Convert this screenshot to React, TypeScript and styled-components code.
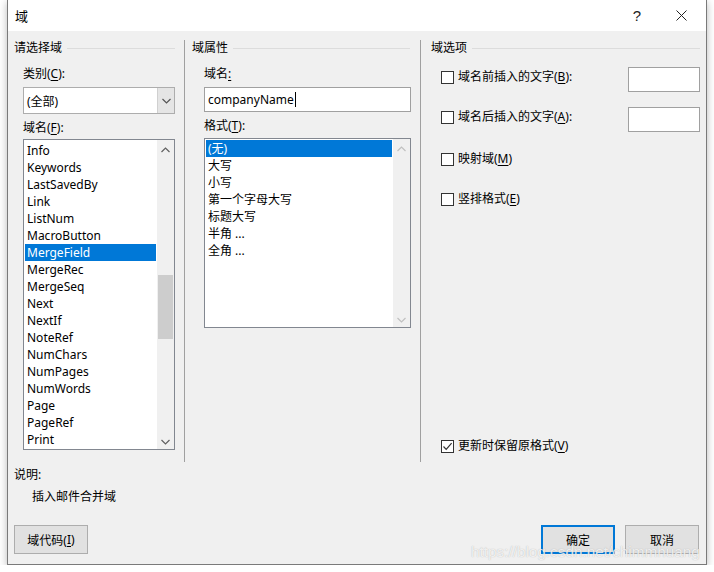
import React from "react";
import styled, { createGlobalStyle } from "styled-components";

const GlobalStyle = createGlobalStyle`
  html, body {
    margin: 0;
    padding: 0;
    background: #ffffff;
  }
  body {
    font-family: "Noto Sans", "Noto Sans CJK SC", sans-serif;
    font-size: 12px;
    color: #000;
  }
  * {
    box-sizing: border-box;
  }
`;

const fieldNames = [
  "Info",
  "Keywords",
  "LastSavedBy",
  "Link",
  "ListNum",
  "MacroButton",
  "MergeField",
  "MergeRec",
  "MergeSeq",
  "Next",
  "NextIf",
  "NoteRef",
  "NumChars",
  "NumPages",
  "NumWords",
  "Page",
  "PageRef",
  "Print",
];

const formats = ["(无)", "大写", "小写", "第一个字母大写", "标题大写", "半角 ...", "全角 ..."];

const Window = styled.div`
  position: relative;
  margin-left: 7px;
  width: 700px;
  height: 565px;
  border: 1px solid #7a7a7a;
  border-top: none;
  background: #f0f0f0;
  display: flex;
  flex-direction: column;
  box-shadow: 0 2px 8px rgba(0, 0, 0, 0.28);
`;

const TitleBar = styled.div`
  height: 31px;
  background: #ffffff;
  display: flex;
  align-items: center;
  padding-left: 7px;
  padding-right: 1px;
`;

const TitleText = styled.div`
  flex: 1;
  font-size: 13px;
`;

const TitleButton = styled.div<{ $w: number }>`
  width: ${(p) => p.$w}px;
  height: 31px;
  display: flex;
  align-items: center;
  justify-content: center;
  font-family: "Liberation Sans", sans-serif;
  font-size: 15px;
  color: #222;
`;

const Body = styled.div`
  flex: 1;
  display: flex;
  flex-direction: column;
  padding-top: 9px;
`;

const Columns = styled.div`
  height: 422px;
  display: flex;
`;

const Column = styled.div<{ $w: number; $pad: number; $sep?: boolean }>`
  width: ${(p) => p.$w}px;
  padding-left: ${(p) => p.$pad}px;
  border-right: ${(p) => (p.$sep ? "1px solid #a0a0a0" : "none")};
  display: flex;
  flex-direction: column;
`;

const GroupHeader = styled.div<{ $indent: number; $right: number }>`
  height: 16px;
  display: flex;
  align-items: center;
  margin-left: ${(p) => p.$indent}px;
  margin-right: ${(p) => p.$right}px;
  line-height: 16px;
`;

const HeaderLine = styled.div`
  flex: 1;
  height: 1px;
  background: #dcdcdc;
  margin-left: 5px;
`;

const Label = styled.div<{ $top: number }>`
  margin-top: ${(p) => p.$top}px;
  line-height: 16px;
  height: 16px;
  white-space: nowrap;
`;

const Key = styled.span`
  text-decoration: underline;
  text-underline-offset: 2px;
`;

const Combo = styled.div`
  margin-top: 5px;
  width: 152px;
  height: 27px;
  border: 1px solid #adadad;
  background: #fff;
  display: flex;
  align-items: center;
`;

const ComboText = styled.div`
  flex: 1;
  padding-left: 3px;
`;

const ComboButton = styled.div`
  width: 17px;
  height: 100%;
  background: #e5e5e5;
  border-left: 1px solid #d0d0d0;
  display: flex;
  align-items: center;
  justify-content: center;
`;

const ListBox = styled.div<{ $top: number; $w: number; $h: number }>`
  margin-top: ${(p) => p.$top}px;
  width: ${(p) => p.$w}px;
  height: ${(p) => p.$h}px;
  border: 1px solid #828790;
  background: #fff;
  display: flex;
`;

const ListItems = styled.div<{ $padTop: number }>`
  flex: 1;
  padding: ${(p) => p.$padTop}px 1px 0 1px;
  overflow: hidden;
`;

const ListItem = styled.div<{ $selected?: boolean }>`
  height: 17px;
  line-height: 17px;
  padding-left: 2px;
  white-space: nowrap;
  background: ${(p) => (p.$selected ? "#0078d7" : "transparent")};
  color: ${(p) => (p.$selected ? "#fff" : "#000")};
`;

const ScrollBar = styled.div`
  width: 17px;
  background: #f0f0f0;
  display: flex;
  flex-direction: column;
`;

const ScrollArrow = styled.div`
  height: 17px;
  display: flex;
  align-items: center;
  justify-content: center;
  padding-top: 3px;
`;

const ScrollTrack = styled.div`
  flex: 1;
  display: flex;
  flex-direction: column;
  padding: 0 1px;
`;

const Thumb = styled.div<{ $top: number; $h: number }>`
  margin-top: ${(p) => p.$top}px;
  height: ${(p) => p.$h}px;
  background: #cdcdcd;
`;

const TextInput = styled.div<{ $w: number }>`
  margin-top: 5px;
  width: ${(p) => p.$w}px;
  height: 25px;
  border: 1px solid #a0a0a0;
  background: #fff;
  display: flex;
  align-items: center;
  padding-left: 3px;
`;

const Caret = styled.span`
  display: inline-block;
  width: 1px;
  height: 15px;
  background: #000;
  margin-left: 1px;
`;

const OptionRow = styled.div<{ $top: number; $h: number }>`
  margin-top: ${(p) => p.$top}px;
  height: ${(p) => p.$h}px;
  display: flex;
  align-items: flex-start;
  justify-content: space-between;
  padding-right: 6px;
`;

const CheckLabel = styled.label<{ $offset: number }>`
  display: flex;
  align-items: center;
  gap: 4px;
  margin-top: ${(p) => p.$offset}px;
  line-height: 16px;
  height: 16px;
  white-space: nowrap;
`;

const Box = styled.span`
  width: 13px;
  height: 13px;
  border: 1px solid #333;
  background: #fff;
  display: flex;
  align-items: center;
  justify-content: center;
`;

const SmallInput = styled.div`
  width: 72px;
  height: 25px;
  border: 1px solid #a0a0a0;
  background: #fff;
`;

const Spacer = styled.div`
  flex: 1;
`;

const Description = styled.div<{ $top: number; $indent: number }>`
  margin-top: ${(p) => p.$top}px;
  margin-left: ${(p) => p.$indent}px;
  height: 16px;
  line-height: 16px;
`;

const ButtonRow = styled.div`
  margin-top: 20px;
  display: flex;
  padding: 0 7px 0 6px;
  gap: 10px;
`;

const Button = styled.div<{ $primary?: boolean }>`
  width: 74px;
  height: 29px;
  background: #e1e1e1;
  border: ${(p) => (p.$primary ? "2px solid #0078d7" : "1px solid #adadad")};
  display: flex;
  align-items: center;
  justify-content: center;
`;

const Watermark = styled.div`
  position: absolute;
  left: 463px;
  top: 543px;
  font-family: "Liberation Sans", sans-serif;
  font-size: 15.3px;
  line-height: 18px;
  color: rgba(255, 255, 255, 0.8);
  text-shadow: 0 0 1px rgba(120, 120, 120, 0.55);
  white-space: nowrap;
  pointer-events: none;
`;

const Chevron: React.FC<{ up?: boolean; color: string }> = ({ up, color }) => (
  <svg width="9" height="6" viewBox="0 0 9 6">
    <path
      d={up ? "M0.5 5 L4.5 1 L8.5 5" : "M0.5 1 L4.5 5 L8.5 1"}
      fill="none"
      stroke={color}
      strokeWidth="1.2"
    />
  </svg>
);

const CloseIcon = () => (
  <svg width="11" height="11" viewBox="0 0 11 11">
    <path d="M0.5 0.5 L10.5 10.5 M10.5 0.5 L0.5 10.5" stroke="#222" strokeWidth="1" />
  </svg>
);

const CheckMark = () => (
  <svg width="11" height="11" viewBox="0 0 11 11">
    <path d="M1.5 5.5 L4.2 8.3 L9.6 2.2" fill="none" stroke="#333" strokeWidth="1.2" />
  </svg>
);

const Check: React.FC<{ checked?: boolean; offset: number; children: React.ReactNode }> = ({
  checked,
  offset,
  children,
}) => (
  <CheckLabel $offset={offset}>
    <Box>{checked && <CheckMark />}</Box>
    <span>{children}</span>
  </CheckLabel>
);

const App: React.FC = () => {
  return (
    <>
      <GlobalStyle />
      <Window>
        <TitleBar>
          <TitleText>域</TitleText>
          <TitleButton $w={40}>?</TitleButton>
          <TitleButton $w={48}>
            <CloseIcon />
          </TitleButton>
        </TitleBar>
        <Body>
          <Columns>
            <Column $w={177} $pad={15} $sep>
              <GroupHeader $indent={-9} $right={9}>
                请选择域
                <HeaderLine />
              </GroupHeader>
              <Label $top={10}>
                类别(<Key>C</Key>):
              </Label>
              <Combo>
                <ComboText>(全部)</ComboText>
                <ComboButton>
                  <Chevron color="#555" />
                </ComboButton>
              </Combo>
              <Label $top={6}>
                域名(<Key>F</Key>):
              </Label>
              <ListBox $top={3} $w={152} $h={311}>
                <ListItems $padTop={2}>
                  {fieldNames.map((n) => (
                    <ListItem key={n} $selected={n === "MergeField"}>
                      {n}
                    </ListItem>
                  ))}
                </ListItems>
                <ScrollBar>
                  <ScrollArrow>
                    <Chevron up color="#606060" />
                  </ScrollArrow>
                  <ScrollTrack>
                    <Thumb $top={118} $h={64} />
                  </ScrollTrack>
                  <ScrollArrow>
                    <Chevron color="#606060" />
                  </ScrollArrow>
                </ScrollBar>
              </ListBox>
            </Column>
            <Column $w={236} $pad={19} $sep>
              <GroupHeader $indent={-12} $right={10}>
                域属性
                <HeaderLine />
              </GroupHeader>
              <Label $top={10}>
                域名<Key>:</Key>
              </Label>
              <TextInput $w={207}>
                companyName
                <Caret />
              </TextInput>
              <Label $top={6}>
                格式(<Key>T</Key>):
              </Label>
              <ListBox $top={4} $w={207} $h={190}>
                <ListItems $padTop={1}>
                  {formats.map((f, i) => (
                    <ListItem key={f} $selected={i === 0}>
                      {f}
                    </ListItem>
                  ))}
                </ListItems>
                <ScrollBar>
                  <ScrollArrow>
                    <Chevron up color="#c0c0c0" />
                  </ScrollArrow>
                  <Spacer />
                  <ScrollArrow>
                    <Chevron color="#c0c0c0" />
                  </ScrollArrow>
                </ScrollBar>
              </ListBox>
            </Column>
            <Column $w={285} $pad={20}>
              <GroupHeader $indent={-10} $right={6}>
                域选项
                <HeaderLine />
              </GroupHeader>
              <OptionRow $top={11} $h={25}>
                <Check offset={2}>
                  域名前插入的文字(<Key>B</Key>):
                </Check>
                <SmallInput />
              </OptionRow>
              <OptionRow $top={15} $h={25}>
                <Check offset={2}>
                  域名后插入的文字(<Key>A</Key>):
                </Check>
                <SmallInput />
              </OptionRow>
              <OptionRow $top={19} $h={16}>
                <Check offset={0}>
                  映射域(<Key>M</Key>)
                </Check>
              </OptionRow>
              <OptionRow $top={24} $h={16}>
                <Check offset={0}>
                  竖排格式(<Key>E</Key>)
                </Check>
              </OptionRow>
              <Spacer />
              <OptionRow $top={0} $h={24}>
                <Check checked offset={0}>
                  更新时保留原格式(<Key>V</Key>)
                </Check>
              </OptionRow>
            </Column>
          </Columns>
          <Description $top={5} $indent={6}>
            说明:
          </Description>
          <Description $top={6} $indent={24}>
            插入邮件合并域
          </Description>
          <ButtonRow>
            <Button>
              域代码(<Key>I</Key>)
            </Button>
            <Spacer />
            <Button $primary>确定</Button>
            <Button>取消</Button>
          </ButtonRow>
        </Body>
        <Watermark>https://blog.csdn.net/chimmhuang</Watermark>
      </Window>
    </>
  );
};

export default App;
